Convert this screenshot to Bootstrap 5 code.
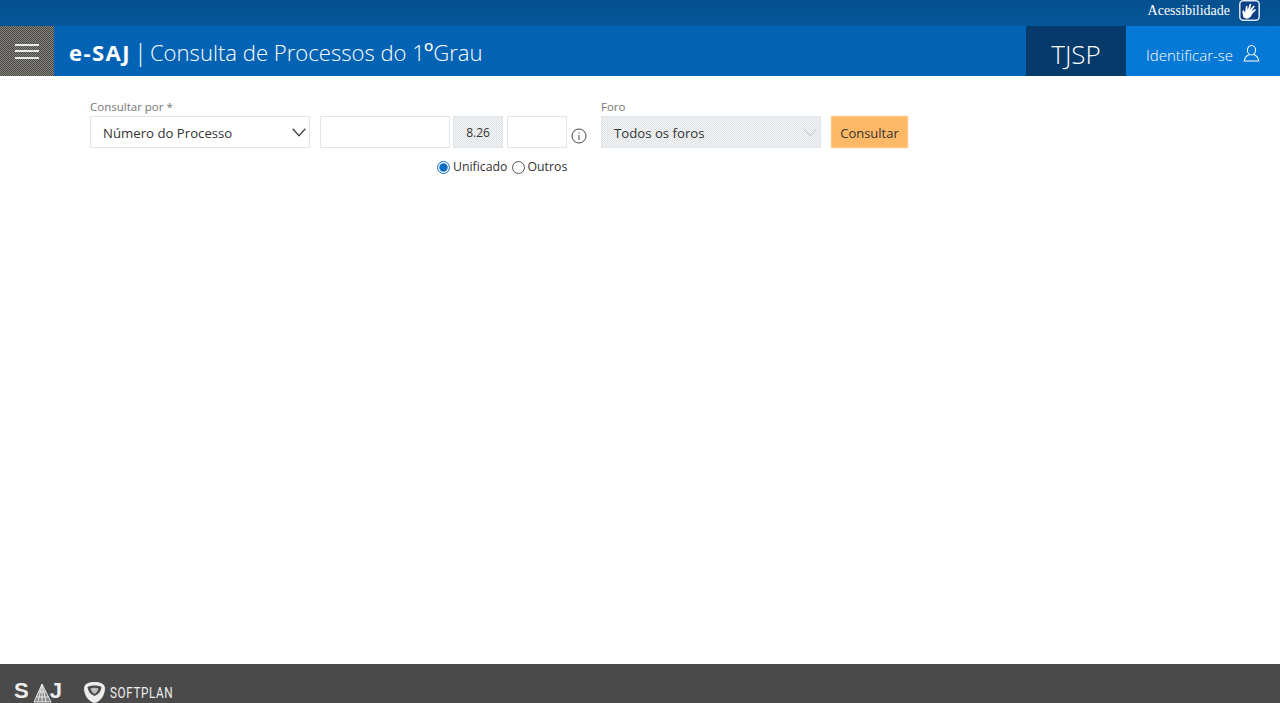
<!DOCTYPE html>
<html lang="pt-BR"><head><meta charset="utf-8"><title>e-SAJ</title>
<link rel="stylesheet" href="https://cdn.jsdelivr.net/npm/bootstrap@5.3.0/dist/css/bootstrap.min.css">
<style>
html,body{height:100%}
body{font-family:"Open Sans","Noto Sans",sans-serif;color:#333;background:#fff}
.shell{height:703px;overflow:hidden}
.topstrip{height:26px;background:linear-gradient(#05508f,#04569a);color:#fff;font:14px/20px "Liberation Serif",serif;padding:0 20px 5px 0}
.hand{width:21px;height:21px;margin-left:9px}
.mainbar{height:50px;background:#0263b5;color:#fff}
.burger{width:54px;background-color:#4a4845;background-image:conic-gradient(#86847f 25%,transparent 0 50%,#86847f 0 75%,transparent 0);background-size:2px 2px;border:0;padding:0}
.burger span{display:block;width:24px;height:2px;background:#e8e8e8;margin:4.500px auto}
.apptitle{font-size:22.100px;font-weight:300;padding-left:15px;line-height:52px;white-space:nowrap}
.apptitle b{font-weight:700;letter-spacing:1.400px}
.sep{margin:0 3px 0 3px;font-size:24px}
.ordsup{font-size:25px;font-weight:400;line-height:0;margin-left:-1px}
.orgbox{width:100px;background:#053a6a;font-size:26px;font-weight:300;line-height:56px;text-align:center}
.loginbox{width:154px;background:#0678d6;font-size:15px;font-weight:300;padding-left:20px;padding-top:5px}
.loginbox span{margin-top:4px}
.formzone{padding:23px 0 0 90px}
.fieldlabel{font-size:11.500px;line-height:16px;color:#767676;display:block;height:16px;margin-bottom:1px}
.ctrl{height:32px;border:1px solid #dfe5e9;font-size:13.200px;line-height:32px;background:#fff;color:#333;border-radius:0;padding:0 12px}
.ctrl span{margin-top:2px}
.c-by{width:220px;margin-right:10px}
.c-num{width:130px;margin-right:3px}
.c-mid{width:50px;margin-right:4px;padding:0;text-align:center;font-size:12px}
.c-end{width:60px}
.hatch{background-color:#f4f5f6;background-image:conic-gradient(#e0e3e5 25%,transparent 0 50%,#e0e3e5 0 75%,transparent 0);background-size:2px 2px}
.c-foro{width:220px;margin-right:10px}
.infoicon{width:16px;height:16px;margin:0 14px 0 4px;color:#444}
.chev{width:14px;height:9px;margin-right:-9px}
.c-go{width:77px;height:32px;background:#ffb966;border:1px solid #ffc98a;box-shadow:0 0 2px #ffd9ad;color:#333;font-size:13px;line-height:32px;padding:0;border-radius:0}
.radiorow{padding-left:347px;margin-top:3px;font-size:12.300px;line-height:32px;height:32px;color:#333}
.radiorow svg{width:13px;height:13px;margin-right:3px}
.radiorow .second{margin-left:4px}
.pagefoot{height:39px;background:#4b4a4a;padding-left:14px;padding-top:16px;color:#eee;margin-top:auto}
.sajmark{width:68px;font-family:"Liberation Sans",sans-serif;font-size:22px;font-weight:700;line-height:20px;margin-top:1px;white-space:nowrap;display:flex}
.sajmark svg{margin:2px -3px 0 3px;flex:none}
.softword{font-family:"Roboto",sans-serif;font-size:15px;font-weight:400;line-height:20px;display:inline-block;transform:scaleX(.78);transform-origin:left;letter-spacing:.8px;margin-top:3px}
</style></head>
<body>
<div class="shell d-flex flex-column">
 <div class="topstrip d-flex justify-content-end align-items-center">
  <span>Acessibilidade</span>
  <svg class="hand" viewBox="0 0 21 21"><rect x=".8" y=".8" width="19.400" height="19.400" rx="3.500" fill="#0a3f88" stroke="#dbe6f3" stroke-width="1.500"/><path d="M4.500 17.500 3.200 11.500 4.600 10l1.500 2.500.8-6.200 1.400-.6.400 4.300L10.800 3.800l1.500.3-1.300 5.700 3.500-4.300 1.300.7-3.300 5 3.600-2.300 1 1.100-4 4c-1.100 3-3 4.500-5.300 4.800Z" fill="#fff"/></svg>
 </div>
 <div class="mainbar d-flex">
  <button class="burger" type="button" aria-label="Menu"><span></span><span></span><span></span></button>
  <div class="apptitle flex-grow-1"><b>e-SAJ</b><span class="sep">|</span>Consulta de Processos do 1<span class="ordsup">º</span>Grau</div>
  <div class="orgbox">TJSP</div>
  <div class="loginbox d-flex align-items-center"><span>Identificar-se</span>
   <svg style="margin-left:10px" width="17" height="19" viewBox="0 0 18 19" fill="none" stroke="#fff" stroke-width="1.100"><ellipse cx="9" cy="6" rx="4.300" ry="5"/><path d="M6.800 10.500C4 11.500 1.800 14 1.300 17.500H16.700C16.200 14 14 11.500 11.200 10.500"/></svg>
  </div>
 </div>
 <form class="formzone flex-grow-1">
  <div class="d-flex align-items-end">
   <div><label class="fieldlabel">Consultar por *</label>
    <div class="ctrl c-by d-flex align-items-center justify-content-between"><span>Número do Processo</span>
     <svg class="chev" viewBox="0 0 14 9" fill="none" stroke="#444" stroke-width="1.300"><path d="M.7.8 7 7.800 13.300.8"/></svg></div></div>
   <div class="ctrl c-num"></div>
   <div class="ctrl c-mid hatch">8.26</div>
   <div class="ctrl c-end"></div>
   <svg class="infoicon mb-1" viewBox="0 0 16 16" fill="none" stroke="currentColor"><circle cx="8" cy="8" r="7"/><path d="M8 7v5M8 4.300v1.200"/></svg>
   <div><label class="fieldlabel">Foro</label>
    <div class="ctrl c-foro hatch d-flex align-items-center justify-content-between"><span>Todos os foros</span>
     <svg class="chev" viewBox="0 0 14 9" fill="none" stroke="#d2d5d8" stroke-width="1.300"><path d="M.7.8 7 7.800 13.300.8"/></svg></div></div>
   <button type="button" class="c-go">Consultar</button>
  </div>
  <div class="radiorow d-flex align-items-center">
   <svg viewBox="0 0 13 13"><circle cx="6.500" cy="6.500" r="6" fill="#fff" stroke="#0a6cc4"/><circle cx="6.500" cy="6.500" r="4.200" fill="#0a6cc4"/></svg><span>Unificado</span>
   <svg class="second" viewBox="0 0 13 13"><circle cx="6.500" cy="6.500" r="6" fill="#fff" stroke="#555"/></svg><span>Outros</span>
  </div>
 </form>
 <div class="pagefoot d-flex align-items-start">
  <div class="sajmark"><span>S</span><svg width="21" height="20" viewBox="0 0 21 20" fill="none" stroke="#e4e4e4" stroke-width="1"><path d="M10 1 2 19h17Z" fill="#8a8a8a"/><path d="M10 1v18M6 19l4-18 4 18M4 14h13M6 9h8"/></svg><span>J</span></div>
  <svg width="23" height="23" viewBox="0 0 23 23" class="flex-shrink-0" style="margin:1px 4px 0 1px"><path d="M11.500 1C6 1 1 2.500 1 7.500 1 14.500 6 21 11.500 22 17 21 22 14.500 22 7.500 22 2.500 17 1 11.500 1Z" fill="#ececec"/><path d="M4.500 6C8 4 15 4 18.500 6 18 10.500 15.500 13.500 11.500 15 7.500 13.500 5 10.500 4.500 6Z" fill="#4b4a4a"/><path d="M7.500 7.500c2.500-1 5.500-1 8 0-.5 2.500-2 4.500-4 5.500-2-1-3.500-3-4-5.500Z" fill="#bdbdbd"/></svg>
  <span class="softword">SOFTPLAN</span>
 </div>
</div>
</body></html>
